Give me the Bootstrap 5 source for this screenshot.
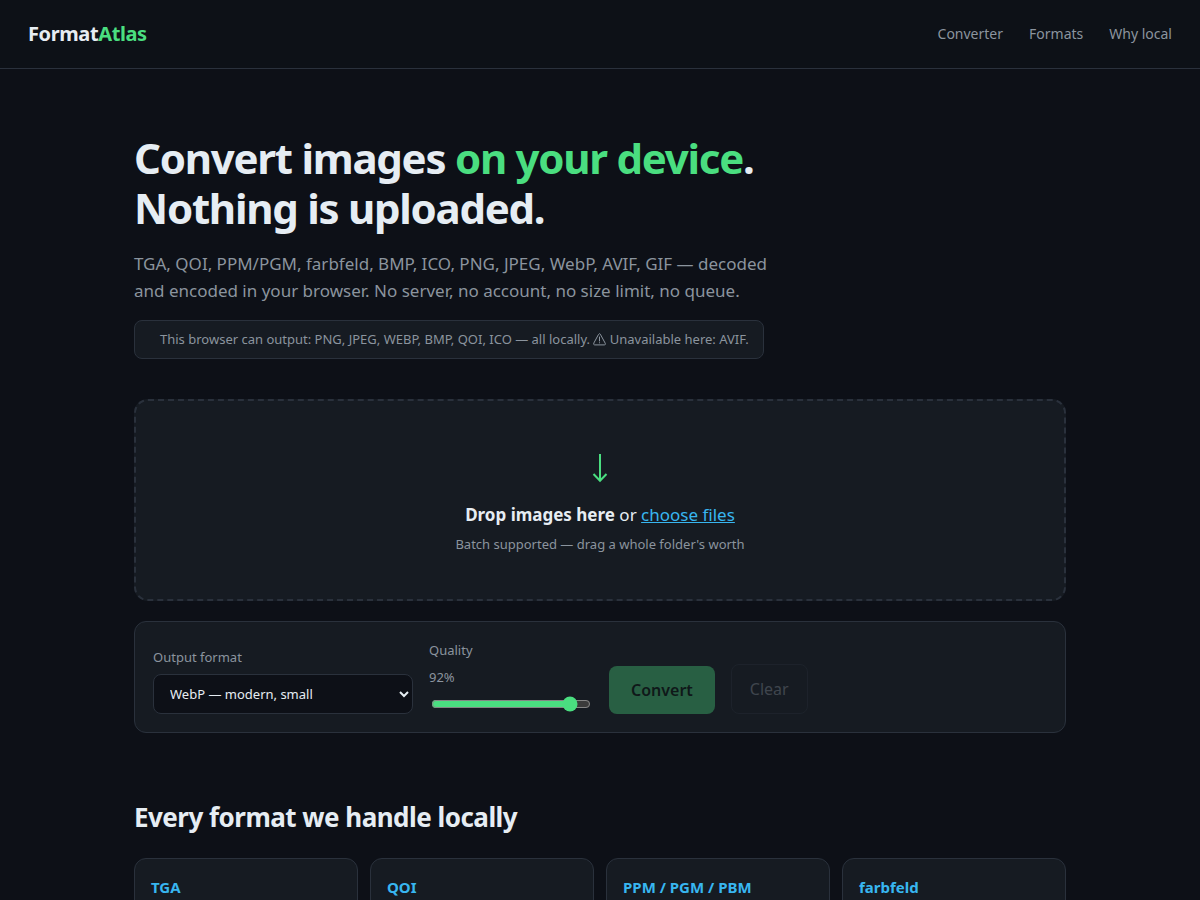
<!DOCTYPE html>
<html lang="en" data-bs-theme="dark">
<head>
<meta charset="utf-8">
<meta name="viewport" content="width=device-width, initial-scale=1">
<title>FormatAtlas</title>
<link rel="stylesheet" href="https://cdn.jsdelivr.net/npm/bootstrap@5.3.0/dist/css/bootstrap.min.css">
<style>
:root { color-scheme: dark; }
body {
  --ink: #e6edf3; --muted: #8b949e; --panel: #161b22; --line: #2a313c;
  --green: #4ade80; --blue: #38b6f0;
  background: #0d1017; color: var(--ink);
  font: 16px/1.6 "Noto Sans", sans-serif;
}
.site-header { background: #0d1117; border-bottom: 1px solid var(--line); padding: 18px 28px; }
.brand { font-size: 20px; font-weight: 700; color: var(--ink); letter-spacing: -0.02em; }
.accent { color: var(--green); }
.site-nav { gap: 26px; font-size: 14px; }
.site-nav a { color: var(--muted); }
.page { max-width: 980px; padding: 64px 24px 0; }
h1, h2 { color: var(--ink); font-weight: 700; }
h1 { font-size: 42px; line-height: 1.2; letter-spacing: -0.03em; margin-bottom: 16px; }
.intro { font-size: 17px; line-height: 27px; color: var(--muted); max-width: 640px; margin-bottom: 16px; }
.panel { background: var(--panel); border: 1px solid var(--line); border-radius: 12px; }
.support { font-size: 13px; line-height: 21px; color: var(--muted); border-radius: 8px; padding: 8px 14px 8px 25px; margin-bottom: 40px; }
.warn-icon { width: 13px; height: 13px; vertical-align: -2px; }
.dropzone { background: var(--panel); border: 2px dashed var(--line); border-radius: 14px; padding: 48px 24px 44px; margin-bottom: 20px; }
.arrow { height: 40px; margin-bottom: 12px; }
.drop-title { font-size: 17px; line-height: 27px; margin-bottom: 6px; }
.drop-title a { color: var(--blue); }
.hint { font-size: 13px; line-height: 21px; color: var(--muted); }
.controls { gap: 16px; padding: 18px; margin-bottom: 64px; }
.field { font-size: 13px; line-height: 21px; color: var(--muted); gap: 6px; }
.format-select { width: 260px; height: 40px; background: #0d1017; color: var(--ink); border: 1px solid var(--line); border-radius: 8px; padding: 0 0 0 12px; font-size: 13px; }
.quality { width: 160px; margin: 2px; accent-color: var(--green); }
.btn-convert, .btn-clear { --bs-btn-disabled-opacity: .35; border-radius: 8px; font-size: 16px; line-height: 24px; }
.btn-convert { --bs-btn-disabled-bg: var(--green); --bs-btn-disabled-color: #04140a; --bs-btn-disabled-border-color: transparent; border: 0; padding: 12px 22px; font-weight: 600; }
.btn-clear { --bs-btn-disabled-color: var(--muted); --bs-btn-disabled-border-color: var(--line); padding: 12px 18px; }
h2 { font-size: 26px; line-height: 41px; letter-spacing: -0.02em; margin-bottom: 20px; }
.formats-row { --bs-gutter-x: 12px; --bs-gutter-y: 12px; }
.format-tile { padding: 16px; min-height: 120px; }
h3 { font-size: 15px; line-height: 24px; font-weight: 700; color: var(--blue); margin: 0; }
</style>
</head>
<body class="vh-100 overflow-hidden">
<header class="site-header d-flex justify-content-between align-items-center">
  <a class="brand text-decoration-none" href="#">Format<span class="accent">Atlas</span></a>
  <nav class="site-nav d-flex">
    <a class="text-decoration-none" href="#converter">Converter</a>
    <a class="text-decoration-none" href="#formats">Formats</a>
    <a class="text-decoration-none" href="#why">Why local</a>
  </nav>
</header>
<main class="page container-fluid mx-auto">
  <h1>Convert images <span class="accent">on your device</span>.<br>Nothing is uploaded.</h1>
  <p class="intro">TGA, QOI, PPM/PGM, farbfeld, BMP, ICO, PNG, JPEG, WebP, AVIF, GIF — decoded and encoded in your browser. No server, no account, no size limit, no queue.</p>
  <div class="d-flex"><div class="panel support">This browser can output: PNG, JPEG, WEBP, BMP, QOI, ICO — all locally. <svg class="warn-icon" viewBox="0 0 13 13" fill="none" stroke="currentColor" stroke-linecap="round" stroke-linejoin="round" aria-hidden="true"><path d="M5.7 1.2Q6.5 0 7.3 1.2L12.3 10.4Q12.8 11.8 11.4 11.9H1.6Q.2 11.8.7 10.4Z"/><path d="M6.5 4v4M6.5 9.7v.2"/></svg> Unavailable here: AVIF.</div></div>
  <section class="dropzone text-center" id="converter">
    <div class="arrow accent"><svg class="d-block mx-auto" width="16" height="40" viewBox="0 0 16 40" fill="none" stroke="currentColor" stroke-width="2" aria-hidden="true"><path d="M8 5v27M1.5 25 8 31.8 14.5 25"/></svg></div>
    <p class="drop-title"><strong>Drop images here</strong> or <a href="#">choose files</a></p>
    <p class="hint mb-0">Batch supported — drag a whole folder's worth</p>
  </section>
  <form class="panel controls d-flex flex-wrap align-items-end">
    <div class="field d-flex flex-column">
      <label for="format">Output format</label>
      <select class="format-select" id="format"><option>WebP — modern, small</option></select>
    </div>
    <div class="field d-flex flex-column">
      <label for="quality">Quality</label>
      <output for="quality">92%</output>
      <input class="quality" id="quality" type="range" min="10" max="100" value="92">
    </div>
    <button class="btn btn-convert" type="button" disabled>Convert</button>
    <button class="btn btn-clear" type="button" disabled>Clear</button>
  </form>
  <h2 id="formats">Every format we handle locally</h2>
  <div class="row row-cols-2 row-cols-md-4 formats-row">
    <div class="col"><article class="panel format-tile"><h3>TGA</h3></article></div>
    <div class="col"><article class="panel format-tile"><h3>QOI</h3></article></div>
    <div class="col"><article class="panel format-tile"><h3>PPM / PGM / PBM</h3></article></div>
    <div class="col"><article class="panel format-tile"><h3>farbfeld</h3></article></div>
  </div>
</main>
<script src="https://cdn.jsdelivr.net/npm/bootstrap@5.3.0/dist/js/bootstrap.bundle.min.js"></script>
</body>
</html>
